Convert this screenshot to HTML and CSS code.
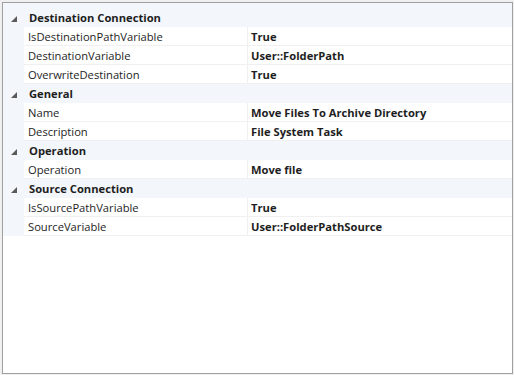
FILE: index.html
```html
<!DOCTYPE html>
<html>
<head>
<meta charset="utf-8">
<link rel="stylesheet" href="styles.css">
</head>
<body>
<div class="panel">
  <div class="top-pad"></div>
  <div class="cat"><span class="tog"><svg width="6" height="6" viewBox="0 0 6 6"><path d="M6 0 L6 6 L0 6 Z" fill="#5a5a5a"/></svg></span><span class="cat-name">Destination Connection</span></div>
  <div class="row"><span class="gut"></span><span class="name">IsDestinationPathVariable</span><span class="val">True</span></div>
  <div class="row"><span class="gut"></span><span class="name">DestinationVariable</span><span class="val">User::FolderPath</span></div>
  <div class="row"><span class="gut"></span><span class="name">OverwriteDestination</span><span class="val">True</span></div>
  <div class="cat"><span class="tog"><svg width="6" height="6" viewBox="0 0 6 6"><path d="M6 0 L6 6 L0 6 Z" fill="#5a5a5a"/></svg></span><span class="cat-name">General</span></div>
  <div class="row"><span class="gut"></span><span class="name">Name</span><span class="val">Move Files To Archive Directory</span></div>
  <div class="row"><span class="gut"></span><span class="name">Description</span><span class="val">File System Task</span></div>
  <div class="cat"><span class="tog"><svg width="6" height="6" viewBox="0 0 6 6"><path d="M6 0 L6 6 L0 6 Z" fill="#5a5a5a"/></svg></span><span class="cat-name">Operation</span></div>
  <div class="row"><span class="gut"></span><span class="name">Operation</span><span class="val">Move file</span></div>
  <div class="cat"><span class="tog"><svg width="6" height="6" viewBox="0 0 6 6"><path d="M6 0 L6 6 L0 6 Z" fill="#5a5a5a"/></svg></span><span class="cat-name">Source Connection</span></div>
  <div class="row"><span class="gut"></span><span class="name">IsSourcePathVariable</span><span class="val">True</span></div>
  <div class="row"><span class="gut"></span><span class="name">SourceVariable</span><span class="val">User::FolderPathSource</span></div>
</div>
</body>
</html>
```
FILE: styles.css
```css
html, body {
  margin: 0;
  padding: 0;
  background: #f0f0f0;
}
body {
  width: 514px;
  height: 375px;
  overflow: hidden;
  font-family: "Open Sans", "Noto Sans", sans-serif;
  font-size: 11.2px;
  color: #1e1e1e;
}
.panel {
  margin: 2px 0 0 2px;
  width: 509px;
  height: 370px;
  border: 1px solid #a0a0a0;
  background: #ffffff;
  display: flex;
  flex-direction: column;
}
.top-pad {
  height: 5px;
  background: #f3f6fb;
}
.cat {
  height: 19px;
  display: flex;
  align-items: center;
  background: #f3f6fb;
}
.tog {
  width: 26px;
  display: flex;
  justify-content: flex-start;
  padding-left: 8px;
  box-sizing: border-box;
  margin-top: 2px;
}
.cat-name {
  font-weight: 700;
  line-height: 19px;
}
.row {
  height: 19px;
  display: flex;
  align-items: stretch;
}
.gut {
  width: 21px;
  flex: none;
  background: #f3f6fb;
}
.name {
  width: 224px;
  flex: none;
  padding-left: 4px;
  padding-top: 2px;
  box-sizing: border-box;
  line-height: 16px;
  border-bottom: 1px solid #f0f0f0;
  border-right: 1px solid #f0f0f0;
}
.val {
  flex: 1;
  padding-left: 3px;
  padding-top: 2px;
  font-weight: 700;
  line-height: 16px;
  border-bottom: 1px solid #f0f0f0;
}
```
